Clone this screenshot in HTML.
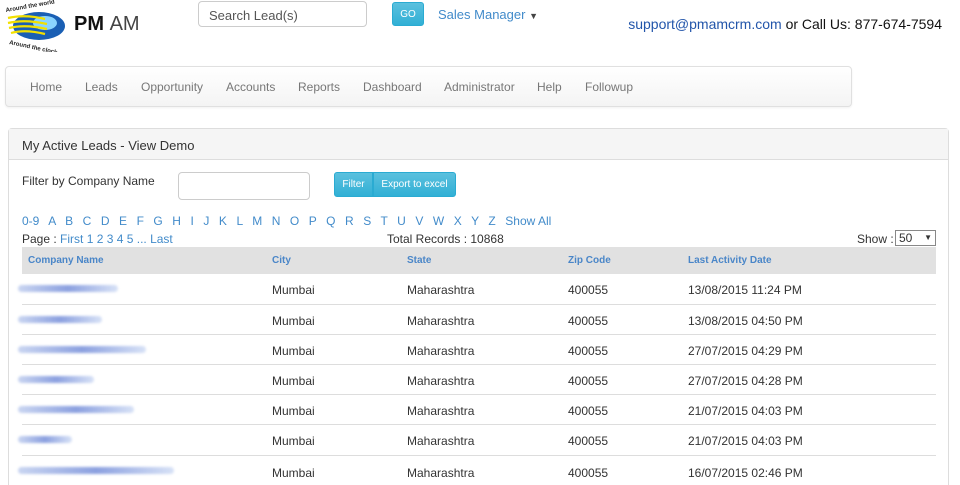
<!DOCTYPE html>
<html style="overflow:hidden;height:485px"><head><style>
body{margin:0;width:960px;height:485px;overflow:hidden;background:#fff;font-family:"Liberation Sans",sans-serif;font-size:12px;color:#333;position:relative}
.a{position:absolute}
a{color:#428bca;text-decoration:none}
.btn{background:linear-gradient(#5bc0de,#31b0d5);border:1px solid #2aabd2;color:#fff;border-radius:3px;font-size:10px;text-align:center;box-sizing:border-box}
.nav span{position:absolute;top:13px;color:#777;font-size:12px}
.row{position:absolute;left:22px;width:914px;height:30px;border-top:1px solid #ddd}
.row span{position:absolute;top:9px;font-size:12px;color:#333}
.blur{position:absolute;left:-4px;top:11px;height:7px;background:linear-gradient(90deg,rgba(120,150,220,.4),rgba(90,120,210,.7),rgba(140,170,230,.35));border-radius:4px;filter:blur(1.2px)}
</style></head><body>
<svg class="a" style="left:3px;top:0" width="68" height="52" viewBox="0 0 68 52">
<ellipse cx="36" cy="26" rx="26" ry="14" fill="#1a5fb4"/>
<ellipse cx="42" cy="23" rx="12" ry="7" fill="#8ad4ff"/>
<path d="M5 18 Q22 14 42 19 M5 23 Q22 19 44 24 M6 28 Q22 24 44 29 M8 33 Q22 29 42 34" stroke="#f2e000" stroke-width="2.2" fill="none"/>
<text x="3" y="12" font-size="6" font-weight="bold" fill="#222" transform="rotate(-10 3 12)">Around the world</text>
<text x="6" y="44" font-size="6" font-weight="bold" fill="#222" transform="rotate(12 6 44)">Around the clock</text>
</svg>
<div class="a" style="left:74px;top:13px;font-size:20px;font-weight:bold;color:#111">PM <span style="font-weight:normal;color:#444">AM</span></div>
<div class="a" style="left:198px;top:1px;width:169px;height:26px;border:1px solid #ccc;border-radius:4px;box-sizing:border-box;padding:6px 10px;font-size:13px;color:#555">Search Lead(s)</div>
<div class="a btn" style="left:392px;top:2px;width:32px;height:24px;line-height:22px;padding-top:1px">GO</div>
<div class="a" style="left:438px;top:7px;font-size:13px;color:#428bca">Sales Manager <span style="font-size:9px;color:#444">▼</span></div>
<div class="a" style="right:18px;top:16px;font-size:14px;color:#111"><span style="color:#2255aa">support@pmamcrm.com</span> or Call Us: 877-674-7594</div>
<div class="a nav" style="left:5px;top:66px;width:847px;height:41px;border:1px solid #e0e0e0;border-radius:4px;background:linear-gradient(#fff,#f4f4f4);box-sizing:border-box;box-shadow:0 1px 2px rgba(0,0,0,.06)">
<span style="left:24px">Home</span><span style="left:79px">Leads</span><span style="left:135px">Opportunity</span><span style="left:220px">Accounts</span><span style="left:292px">Reports</span><span style="left:357px">Dashboard</span><span style="left:438px">Administrator</span><span style="left:531px">Help</span><span style="left:579px">Followup</span></div>
<div class="a" style="left:8px;top:128px;width:941px;height:370px;border:1px solid #ddd;border-radius:4px;box-sizing:border-box">
<div style="height:31px;background:#f5f5f5;border-bottom:1px solid #ddd;padding:9px 0 0 13px;box-sizing:border-box;font-size:13px;color:#333">My Active Leads - View Demo</div></div>
<div class="a" style="left:22px;top:174px">Filter by Company Name</div>
<div class="a" style="left:178px;top:172px;width:132px;height:28px;border:1px solid #ccc;border-radius:4px;box-sizing:border-box"></div>
<div class="a btn" style="left:334px;top:172px;width:39px;height:25px;line-height:23px;border-radius:3px 0 0 3px">Filter</div>
<div class="a btn" style="left:373px;top:172px;width:83px;height:25px;line-height:23px;border-radius:0 3px 3px 0">Export to excel</div>
<div class="a" style="left:22px;top:214px;color:#428bca;word-spacing:6.2px">0-9 A B C D E F G H I J K L M N O P Q R S T U V W X Y Z <span style="word-spacing:0">Show All</span></div>
<div class="a" style="left:22px;top:232px">Page : <a>First 1 2 3 4 5 ... Last</a></div>
<div class="a" style="left:387px;top:232px">Total Records : 10868</div>
<div class="a" style="left:857px;top:232px">Show :</div>
<div class="a" style="left:895px;top:230px;width:41px;height:16px;border:1px solid #888;box-sizing:border-box;font-size:12px;padding:0 3px;line-height:14px">50<span style="float:right;font-size:8px">▼</span></div>
<div class="a" style="left:22px;top:247px;width:914px;height:27px;background:#e1e1e1;font-size:10px;font-weight:bold;color:#4a86c8">
<span class="a" style="left:6px;top:8px">Company Name</span><span class="a" style="left:250px;top:8px">City</span><span class="a" style="left:385px;top:8px">State</span><span class="a" style="left:546px;top:8px">Zip Code</span><span class="a" style="left:666px;top:8px">Last Activity Date</span></div>
<div class="row" style="top:274px;border-top:0"><div class="blur" style="width:100px"></div><span style="left:250px">Mumbai</span><span style="left:385px">Maharashtra</span><span style="left:546px">400055</span><span style="left:666px">13/08/2015 11:24 PM</span></div>
<div class="row" style="top:304px"><div class="blur" style="width:84px"></div><span style="left:250px">Mumbai</span><span style="left:385px">Maharashtra</span><span style="left:546px">400055</span><span style="left:666px">13/08/2015 04:50 PM</span></div>
<div class="row" style="top:334px"><div class="blur" style="width:128px"></div><span style="left:250px">Mumbai</span><span style="left:385px">Maharashtra</span><span style="left:546px">400055</span><span style="left:666px">27/07/2015 04:29 PM</span></div>
<div class="row" style="top:364px"><div class="blur" style="width:76px"></div><span style="left:250px">Mumbai</span><span style="left:385px">Maharashtra</span><span style="left:546px">400055</span><span style="left:666px">27/07/2015 04:28 PM</span></div>
<div class="row" style="top:394px"><div class="blur" style="width:116px"></div><span style="left:250px">Mumbai</span><span style="left:385px">Maharashtra</span><span style="left:546px">400055</span><span style="left:666px">21/07/2015 04:03 PM</span></div>
<div class="row" style="top:424px"><div class="blur" style="width:54px"></div><span style="left:250px">Mumbai</span><span style="left:385px">Maharashtra</span><span style="left:546px">400055</span><span style="left:666px">21/07/2015 04:03 PM</span></div>
<div class="row" style="top:455px"><div class="blur" style="width:156px"></div><span style="left:250px;top:10px">Mumbai</span><span style="left:385px;top:10px">Maharashtra</span><span style="left:546px;top:10px">400055</span><span style="left:666px;top:10px">16/07/2015 02:46 PM</span></div>
</body></html>
